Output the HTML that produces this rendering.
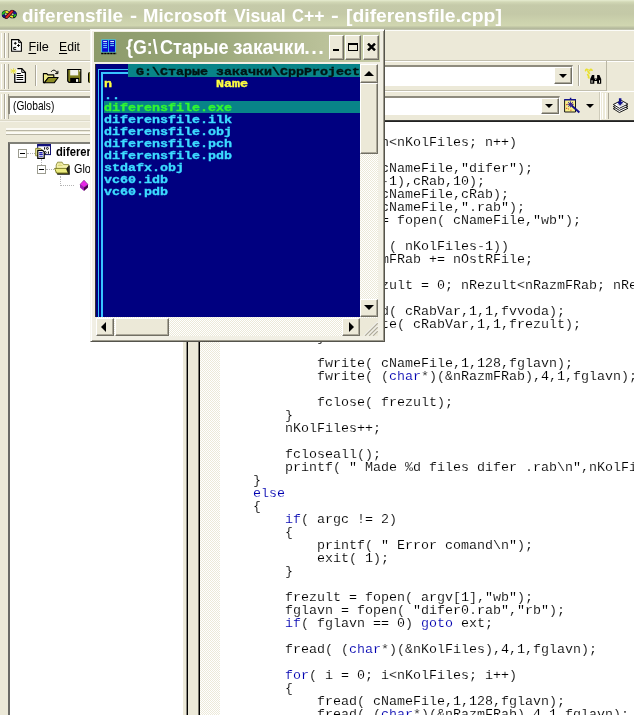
<!DOCTYPE html>
<html lang="ru">
<head>
<meta charset="utf-8">
<title>diferensfile - Microsoft Visual C++ - [diferensfile.cpp]</title>
<style>
html,body{margin:0;padding:0;}
body{width:634px;height:715px;overflow:hidden;position:relative;background:#fff;font-family:"Liberation Sans",sans-serif;}
.a{position:absolute;}
.t{position:absolute;white-space:pre;transform-origin:0 0;line-height:1;}
#title{left:0;top:0;width:634px;height:31px;background:linear-gradient(to bottom,#e6ecd0 0px,#d2d8b6 2px,#c5caa9 5px,#c4c9a7 14px,#ccd2ad 21px,#d0d6b0 25.5px,#bcc1a2 27.5px,#aeb297 29.4px,#f8f8f0 29.8px,#fff 31px);}
#title .t{top:5.7px;color:#fff;font-weight:bold;font-size:19px;}
#bars{left:0;top:31px;width:634px;height:90px;background:#ece9d8;}
.grip{position:absolute;width:2px;border-left:1px solid #fff;border-right:1px solid #aca899;box-sizing:content-box;background:#ece9d8;}
.menu{font-size:12.7px;color:#000;}
.menu u{text-underline-offset:2px;text-decoration-thickness:1px;}
.combo{position:absolute;background:#fff;border:2px solid #8e8b7e;border-right:1px solid #fff;border-bottom:1px solid #fff;box-sizing:border-box;}
.btn{position:absolute;background:#ece9d8;box-sizing:border-box;border:1px solid #fff;border-right-color:#716f64;border-bottom-color:#716f64;box-shadow:inset -1px -1px 0 #aca899;}
.arrow-d{position:absolute;width:0;height:0;border-left:4px solid transparent;border-right:4px solid transparent;border-top:4px solid #000;}
.sepv{position:absolute;width:1px;background:#aca899;border-right:1px solid #fff;}
#ws{left:0;top:121px;width:198px;height:594px;background:#ece9d8;}
#tree{left:8px;top:142px;width:175px;height:573px;background:#fff;border-left:2px solid #6a6a66;border-top:2px solid #808078;box-sizing:border-box;}
.dither{background:repeating-conic-gradient(#fff 0 25%,#ece9d8 0 50%) 0 0/2px 2px;}
#code{left:221px;top:136px;font-family:"Liberation Mono",monospace;font-size:13.33px;line-height:13px;color:#000;white-space:pre;margin:0;-webkit-text-stroke:0.12px #fff;}
#code b{font-weight:normal;color:#0000b0;}
/* popup */
#pop{left:90px;top:29px;width:295px;height:313px;background:#f1efe4;box-sizing:border-box;border:1px solid #f8f7f0;border-right-color:#55544c;border-bottom-color:#55544c;box-shadow:inset 1px 1px 0 #fff, inset -1px -1px 0 #9d9a8c;}
#ptitle{left:3px;top:2px;width:285.5px;height:30px;background:linear-gradient(to right,#8d9b6b 0,#96a476 35%,#b3bb92 70%,#c8cda8 100%);}
#ptitle .t{top:5px;color:#fff;font-weight:bold;font-size:20px;}
#con{left:4px;top:34px;width:265px;height:253px;background:#000080;border-left:1px solid #303030;box-sizing:border-box;overflow:hidden;}
#con>div{margin-top:1px;}
#con>div.row{margin-top:2px;}
.row{position:absolute;left:0;height:12px;font-family:"Liberation Mono",monospace;font-weight:bold;font-size:11px;line-height:12px;white-space:pre;transform-origin:0 0;transform:scaleX(1.212);color:#3cdcff;-webkit-text-stroke:0.35px currentColor;}
.sb{position:absolute;}
.arr{position:absolute;width:0;height:0;}
</style>
</head>
<body>
<div id="root" style="position:absolute;left:0;top:0;width:634px;height:715px;overflow:hidden;will-change:transform">
<!-- main window title bar -->
<div id="title" class="a">
<svg class="a" style="left:1px;top:9.2px;transform:scale(.93,.86);transform-origin:8.2px 5.3px" width="18" height="12" viewBox="0 0 18 12">
<ellipse cx="4.5" cy="5.3" rx="2.9" ry="3.0" fill="none" stroke="#0a0a20" stroke-width="3.4"/>
<ellipse cx="11.9" cy="5.3" rx="2.9" ry="3.0" fill="none" stroke="#0a0a20" stroke-width="3.4"/>
<path d="M1.64 5.82 A2.90 3.00 0 0 1 3.75 2.40" fill="none" stroke="#22c022" stroke-width="2.2"/>
<path d="M4.10 2.33 A2.90 3.00 0 0 1 7.13 4.03" fill="none" stroke="#f0ec20" stroke-width="2.2"/>
<path d="M3.75 8.20 A2.90 3.00 0 0 1 1.64 5.82" fill="none" stroke="#10108c" stroke-width="2.2"/>
<path d="M6.36 7.60 A2.90 3.00 0 0 1 3.75 8.20" fill="none" stroke="#7010a0" stroke-width="2.2"/>
<path d="M9.10 4.52 A2.90 3.00 0 0 1 13.35 2.70" fill="none" stroke="#5010a0" stroke-width="2.2"/>
<path d="M13.35 2.70 A2.90 3.00 0 0 1 14.79 5.04" fill="none" stroke="#1818a0" stroke-width="2.2"/>
<path d="M14.80 5.30 A2.90 3.00 0 0 1 12.89 8.12" fill="none" stroke="#22c022" stroke-width="2.2"/>
<path d="M12.30 8.27 A2.90 3.00 0 0 1 9.39 6.80" fill="none" stroke="#f0ec20" stroke-width="2.2"/>
<path d="M5.2 9 L11.4 1.6" stroke="#30101c" stroke-width="3.6" stroke-linecap="round"/>
<path d="M5.4 8.8 L11.2 1.8" stroke="#e02020" stroke-width="2.2" stroke-linecap="round"/>
</svg>
<span class="t" id="tt" style="left:22.2px;transform:scaleX(0.996)">diferensfile </span><span class="t" style="left:130.4px;transform:scaleX(1.120)">- </span><span class="t" style="left:143.1px;transform:scaleX(0.975)">Microsoft </span><span class="t" style="left:233.6px;transform:scaleX(0.930)">Visual </span><span class="t" style="left:292.1px;transform:scaleX(0.867)">C</span><span class="t" style="left:303.9px;transform:scaleX(0.924)">++ </span><span class="t" style="left:331.1px;transform:scaleX(1.220)">- </span><span class="t" style="left:346.0px;transform:scaleX(1.018)">[diferensfile.cpp]</span>
</div>

<!-- menu + toolbars background -->
<div id="bars" class="a"></div>
<div class="a" style="left:0;top:60px;width:634px;height:1px;background:#c2bfae"></div>
<div class="a" style="left:0;top:61px;width:634px;height:1px;background:#fff"></div>
<div class="a" style="left:0;top:90px;width:607px;height:1px;background:#c2bfae"></div>
<div class="a" style="left:0;top:91px;width:634px;height:1px;background:#fff"></div>
<div class="a" style="left:606px;top:61px;width:1px;height:30px;background:#b9b6a5"></div>


<!-- menu row -->
<div class="grip" style="left:1px;top:33px;height:25px"></div>
<div class="grip" style="left:5px;top:33px;height:25px"></div>
<svg class="a" style="left:10px;top:38px" width="13" height="15" viewBox="0 0 13 15">
<path d="M1.6 1.6 H8.6 L11.4 4.6 V13.3 H1.6 Z" fill="#fff" stroke="#000" stroke-width="1.1"/>
<path d="M8.6 1.6 V4.6 H11.4" fill="none" stroke="#000" stroke-width=".9"/>
<path d="M3.9 5.3 h2.8 M5.3 3.9 v2.8 M7.1 7.5 h2.8 M8.5 6.1 v2.8" stroke="#000" stroke-width="1"/>
<path d="M6.2 9.4 H3.7 V11.4 H6.2" fill="none" stroke="#000" stroke-width="1"/>
</svg>
<span class="t menu" style="left:28.4px;top:41px;transform:scaleX(1.0)"><u>F</u>ile</span>
<span class="t menu" style="left:58.6px;top:41px;transform:scaleX(.96)"><u>E</u>dit</span>

<!-- toolbar 1 -->
<div class="grip" style="left:1px;top:64px;height:25px"></div>
<div class="grip" style="left:5px;top:64px;height:25px"></div>
<svg class="a" style="left:9px;top:67px" width="18" height="17" viewBox="0 0 18 17">
<path d="M5.8 15.3 H16.4 V5.4 L12.8 1.6 H7.6 L5.8 4 Z" fill="#fff"/>
<path d="M5.8 6.6 V15.3 H16.4 V5.4 L12.8 1.6 H8.4" fill="none" stroke="#000" stroke-width="1.3"/>
<path d="M12.8 1.6 V5.4 H16.4" fill="none" stroke="#000" stroke-width="1"/>
<path d="M7.8 6.5 h4 M7.6 8.5 h6.6 M7.6 10.5 h6.6 M7.6 12.5 h6.6" stroke="#000" stroke-width="1.1"/>
<path d="M1.6 2.2 L7.2 5.8 M4.6 1.2 V7 M1.8 5.8 L7.2 2.4 M1.4 4 H7.6" stroke="#e6e048" stroke-width="1"/>
</svg>
<div class="sepv" style="left:35px;top:65px;height:21px"></div>
<svg class="a" style="left:42px;top:68px" width="18" height="16" viewBox="0 0 18 16">
<path d="M1.4 14.6 V5.6 H4.8 L5.8 6.9 H11.8 V9.6 H6.4 L2.6 14.6 Z" fill="#f0ec8c" stroke="#000" stroke-width="1.1" stroke-linejoin="round"/>
<path d="M2.4 14.7 L6.5 9.5 H16.2 L12.3 14.7 Z" fill="#8c8c22" stroke="#000" stroke-width="1.1" stroke-linejoin="round"/>
<path d="M9.2 3.8 C10.4 1.6 13.6 1.4 15.2 5" fill="none" stroke="#000" stroke-width="1"/>
<path d="M13.2 5.6 H15.9 V2.8" fill="none" stroke="#000" stroke-width="1"/>
</svg>
<svg class="a" style="left:66px;top:68px" width="17" height="16" viewBox="0 0 17 16">
<path d="M1.7 1.5 H14.8 V14.3 H3 L1.7 13 Z" fill="#80801e" stroke="#000" stroke-width="1.2"/>
<rect x="4.2" y="2" width="8" height="5.4" fill="#f4f4ec"/>
<rect x="4.2" y="9.9" width="8.9" height="4.5" fill="#000"/>
<rect x="10" y="11.1" width="2.2" height="2.8" fill="#f4f4ec"/>
<rect x="13" y="2.2" width="1.2" height="1.2" fill="#f4f4ec"/>
</svg>
<div class="a" style="left:88px;top:72px;width:3px;height:11px;background:#80801e;border-left:1.2px solid #000;border-radius:2px 0 0 2px"></div>

<div class="combo" style="left:330px;top:65px;width:243px;height:21px"></div>
<div class="btn" style="left:554px;top:67px;width:18px;height:17px"></div>
<div class="arrow-d" style="left:559px;top:74px"></div>
<div class="sepv" style="left:578px;top:65px;height:21px"></div>
<svg class="a" style="left:584px;top:67px" width="19" height="18" viewBox="0 0 19 18">
<path d="M1.6 3.6 q.6 -2.2 2.4 -.6 M5.8 3.6 q.8 -2.4 2.2 -.4 M4 4.6 l1.4 1.8 M3.6 7.6 l1.2 1.6 M4.4 10.2 l.6 .6" fill="none" stroke="#e8e030" stroke-width="1.7" stroke-linecap="round"/>
<path d="M6.2 16.8 V12 L8 8 H10.3 V11.4 H13.1 V8 H15.4 L17.2 12 V16.8 H13.1 V14 H10.3 V16.8 Z" fill="#000"/>
<rect x="7.5" y="13.2" width="1" height="2.6" fill="#f4f2e6"/><rect x="15" y="13.2" width="1" height="2.6" fill="#f4f2e6"/>
<rect x="11.2" y="11.9" width="1" height="1" fill="#f4f2e6"/>
</svg>

<!-- toolbar 2 -->
<div class="grip" style="left:1px;top:94px;height:25px"></div>
<div class="grip" style="left:5px;top:94px;height:25px"></div>
<div class="combo" style="left:8px;top:96px;width:200px;height:19px"></div>
<span class="t" id="glob" style="left:13.3px;top:100.2px;font-size:12.2px;color:#000;transform:scaleX(.835)">(Globals)</span>
<div class="combo" style="left:330px;top:96px;width:230px;height:19px"></div>
<div class="btn" style="left:540.5px;top:98px;width:18.5px;height:15.6px"></div>
<div class="arrow-d" style="left:545px;top:104px"></div>
<svg class="a" style="left:563px;top:97px" width="18" height="17" viewBox="0 0 18 17">
<rect x="1.6" y="2.6" width="10.8" height="12.4" fill="#f8f088"/>
<path d="M1.6 3 V15 H12.5 V3" fill="none" stroke="#181818" stroke-width="1"/>
<path d="M1.1 2.8 H13 M7.6 .8 V2.8" stroke="#14148c" stroke-width="1.5"/>
<path d="M3.2 7.6 h1 M3.2 11.4 h1 M7.4 13.2 h1 M8.6 7.4 h1 M5 12 h.8" stroke="#d83018" stroke-width="1.1"/>
<path d="M7.4 4.4 v6 M4.4 7.3 h6.2 M5.2 5.2 l4.6 4.4 M9.8 5.2 l-4.6 4.4" stroke="#2c1c9c" stroke-width="1"/>
<path d="M8.6 8.6 L16.4 15.4" stroke="#14148c" stroke-width="2"/>
</svg>
<div class="arrow-d" style="left:585.5px;top:104px"></div>
<div class="a" style="left:599px;top:92px;width:1px;height:28px;background:#cfccbb"></div>
<div class="a" style="left:600px;top:92px;width:1px;height:28px;background:#fff"></div>
<div class="grip" style="left:601.5px;top:93px;height:26px"></div>
<div class="grip" style="left:605px;top:93px;height:26px"></div>
<svg class="a" style="left:612px;top:96px" width="18" height="18" viewBox="0 0 18 18">
<path d="M1.3 12.7 L9.3 8.6 L15.9 12.3 L7.4 16.5 Z" fill="#fff" stroke="#000" stroke-width=".9" stroke-linejoin="round"/>
<path d="M1.3 10.6 L9.3 6.5 L15.9 10.2 L7.4 14.4 Z" fill="#fff" stroke="#000" stroke-width=".9" stroke-linejoin="round"/>
<path d="M1.3 8.5 L9.3 4.4 L15.9 8.1 L7.4 12.3 Z" fill="#fff" stroke="#000" stroke-width=".9" stroke-linejoin="round"/>
<path d="M4.6 8.4 L9 6.2 L12.6 8.2 L8 10.6 Z" fill="#c8c8c8"/>
<path d="M6.9 2.2 h2.5 v3.8 h1.9 l-3.2 3.4 l-3.1 -3.4 h1.9 z" fill="#10108c"/>
</svg>

<!-- workspace pane -->
<div id="ws" class="a"></div>
<div class="a" style="left:0;top:120px;width:187px;height:1px;background:#dcd9c8"></div>
<div class="a" style="left:0;top:121px;width:187px;height:1px;background:#f6f4ea"></div>
<div class="a" style="left:6px;top:128px;width:180px;height:2px;background:#fbfaf4;border-bottom:1px solid #b8b5a4"></div>
<div class="a" style="left:6px;top:131.8px;width:180px;height:2px;background:#fbfaf4;border-bottom:1px solid #b8b5a4"></div>
<div id="tree" class="a"></div>
<div class="a" style="left:186px;top:121px;width:2px;height:594px;background:linear-gradient(to right,#8a8880 0,#8a8880 50%,#000 50%)"></div>
<div class="a" style="left:198px;top:121px;width:2px;height:594px;background:linear-gradient(to right,#77756c 0,#77756c 50%,#000 50%)"></div>

<!-- tree content -->
<div class="a" style="left:18px;top:149px;width:9px;height:9px;box-sizing:border-box;border:1px solid #9c9c90;background:#fff"></div>
<div class="a" style="left:20px;top:153px;width:5px;height:1px;background:#000"></div>
<div class="a" style="left:27px;top:153px;width:8px;height:0;border-top:1px dotted #b4b4b4"></div>
<svg class="a" style="left:35px;top:143px" width="17" height="17" viewBox="0 0 17 17">
<rect x="2.7" y="1.6" width="12.8" height="10" fill="#fff" stroke="#10106c" stroke-width="1"/>
<rect x="2.2" y="1.1" width="13.8" height="2.2" fill="#10107c"/>
<path d="M9.6 4.2 v2.4 M13.4 8.4 v2.4" stroke="#000" stroke-width="1"/>
<ellipse cx="12.4" cy="5.4" rx=".9" ry="1.1" fill="none" stroke="#000" stroke-width=".9"/>
<ellipse cx="10.3" cy="9.6" rx=".9" ry="1.1" fill="none" stroke="#000" stroke-width=".9"/>
<path d="M.7 12.8 V5.4 H5.6 L6.6 6.6 V12.8 Z" fill="#f0eca8" stroke="#8c8c30" stroke-width="1"/>
<path d="M2.8 7.3 H7.6 L9.2 8.9 V15.3 H2.8 Z" fill="#fff" stroke="#000" stroke-width="1.2"/>
<path d="M4.2 9.6 h3.4 M4.2 11.4 h3.6 M4.2 13.3 h3.6" stroke="#1c1cb0" stroke-width="1.1"/>
</svg>
<span class="t" id="tr1" style="left:55.5px;top:146.3px;font-size:12.3px;font-weight:bold;color:#000;transform:scaleX(.91)">diferensfile classes</span>
<div class="a" style="left:41px;top:159px;width:0;height:6px;border-left:1px dotted #b4b4b4"></div>
<div class="a" style="left:37px;top:165px;width:9px;height:9px;box-sizing:border-box;border:1px solid #9c9c90;background:#fff"></div>
<div class="a" style="left:39px;top:169px;width:5px;height:1px;background:#000"></div>
<div class="a" style="left:46px;top:169px;width:8px;height:0;border-top:1px dotted #b4b4b4"></div>
<svg class="a" style="left:54px;top:161px" width="18" height="15" viewBox="0 0 18 15">
<path d="M12.6 4.6 H15.8 V13.7 H3.3 L2.9 12 H14 Z" fill="#141410"/>
<path d="M2.2 11.9 V4 L3.6 1.2 H8.1 L9.5 3.6 H14.7 V11.9 Z" fill="#f6f2b0" stroke="#8c8c38" stroke-width=".9" stroke-linejoin="round"/>
<path d="M4.4 3 h3 M3.8 4.6 h4.8" stroke="#d8d478" stroke-width="1"/>
<path d="M.6 7.4 H12.3 L14.1 12 H2.6 Z" fill="#ecec80" stroke="#74741c" stroke-width=".9" stroke-linejoin="round"/>
<path d="M12.3 7.4 L14.1 12 L14.8 12 V4.6 Z" fill="#141410"/>
</svg>
<span class="t" id="tr2" style="left:74.3px;top:162.6px;font-size:12.3px;color:#000;transform:scaleX(.88)">Globals</span>
<div class="a" style="left:60px;top:176px;width:0;height:10px;border-left:1px dotted #b4b4b4"></div>
<div class="a" style="left:60px;top:185px;width:14px;height:0;border-top:1px dotted #b4b4b4"></div>
<svg class="a" style="left:79px;top:179px" width="10" height="13" viewBox="0 0 10 13">
<path d="M1 5.5 L5 8.3 V12 L1 8.5 Z" fill="#a018b8"/>
<path d="M9 5.5 L5 8.3 V12 L9 8.5 Z" fill="#48004c"/>
<path d="M5 1.2 L9 5.5 L5 8.3 L1 5.5 Z" fill="#e828e8" stroke="#701078" stroke-width=".6"/>
</svg>

<!-- editor -->
<div class="a" style="left:198px;top:120px;width:436px;height:2px;background:linear-gradient(#4a4a46,#141414)"></div>
<div class="a dither" style="left:200px;top:122px;width:20px;height:593px"></div>
<pre id="code" class="a">        <b>for</b>( n = 0; n&lt;nKolFiles; n++)
        {
            strcpy( cNameFile,"difer");
            itoa( (n-1),cRab,10);
            strcat( cNameFile,cRab);
            strcat( cNameFile,".rab");
            frezult = fopen( cNameFile,"wb");

            <b>if</b>( n == ( nKolFiles-1))
                nRazmFRab += nOstRFile;

            <b>for</b>( nRezult = 0; nRezult&lt;nRazmFRab; nRezult++)
            {
                fread( cRabVar,1,1,fvvoda);
                fwrite( cRabVar,1,1,frezult);
            }

            fwrite( cNameFile,1,128,fglavn);
            fwrite( (<b>char</b>*)(&amp;nRazmFRab),4,1,fglavn);

            fclose( frezult);
        }
        nKolFiles++;

        fcloseall();
        printf( " Made %d files difer .rab\n",nKolFiles);
    }
    <b>else</b>
    {
        <b>if</b>( argc != 2)
        {
            printf( " Error comand\n");
            exit( 1);
        }

        frezult = fopen( argv[1],"wb");
        fglavn = fopen( "difer0.rab","rb");
        <b>if</b>( fglavn == 0) <b>goto</b> ext;

        fread( (<b>char</b>*)(&amp;nKolFiles),4,1,fglavn);

        <b>for</b>( i = 0; i&lt;nKolFiles; i++)
        {
            fread( cNameFile,1,128,fglavn);
            fread( (<b>char</b>*)(&amp;nRazmFRab),4,1,fglavn);</pre>

<!-- popup: Far manager window -->
<div id="pop" class="a">
<div id="ptitle" class="a">
<svg class="a" style="left:5px;top:7px" width="19" height="16" viewBox="0 0 19 16">
<rect x="2.2" y=".4" width="14.6" height="13" fill="#38c8f0"/>
<rect x="3.1" y="1.2" width="6" height="11.6" fill="#0808d0"/>
<rect x="10" y="1.2" width="6" height="11.6" fill="#0808c0"/>
<path d="M4.2 2.6 h3.8 M11.2 2.6 h3.8" stroke="#f0f8ff" stroke-width="1"/>
<path d="M4.2 4.6 h3.8 M4.2 6.6 h3.8 M4.2 8.6 h3.8 M11.2 4.6 h3.8 M11.2 6.6 h3.8" stroke="#70d0ff" stroke-width="1"/>
<path d="M2.2 14.4 h15.2" stroke="#000" stroke-width="1.5" stroke-dasharray="2.4 .6"/>
</svg>
<span class="t" id="pt" style="left:31.7px;transform:scaleX(.89)">{G:\</span><span class="t" id="pt1" style="left:65.6px;transform:scaleX(.905)">Старые</span><span class="t" id="pt2" style="left:138.6px;transform:scaleX(.958)">закачки</span><span class="t" id="pt3" style="left:210.2px;letter-spacing:1.5px">...</span>
<div class="btn" style="left:235px;top:3px;width:15px;height:24.6px"></div>
<div class="a" style="left:239px;top:17px;width:6px;height:2.4px;background:#000"></div>
<div class="btn" style="left:251px;top:3px;width:16px;height:24.6px"></div>
<div class="a" style="left:253.5px;top:10.5px;width:10px;height:8px;box-sizing:border-box;border:1px solid #000;border-top-width:2px"></div>
<div class="btn" style="left:268.5px;top:3px;width:16px;height:24.6px"></div>
<svg class="a" style="left:272.5px;top:11px" width="9" height="8" viewBox="0 0 9 8"><path d="M1 .6 L8 7.4 M8 .6 L1 7.4" stroke="#000" stroke-width="2.4"/></svg>
</div>
<div id="con" class="a">
<div class="a" style="left:32px;top:-1px;width:232px;height:13px;background:#088488"></div>
<div class="a" style="left:8px;top:36px;width:256px;height:12px;background:#088488"></div>
<div class="a" style="left:1.6px;top:4px;width:1.6px;height:250px;background:#38c4ff"></div>
<div class="a" style="left:5.4px;top:8px;width:1.8px;height:250px;background:#38c4ff"></div>
<div class="a" style="left:1.6px;top:3.6px;width:30.4px;height:1.4px;background:#38c4ff"></div>
<div class="a" style="left:5.4px;top:7.4px;width:26.6px;height:1.4px;background:#38c4ff"></div>
<div class="row" style="left:32px;top:0;color:#001414"> G:\Старые закачки\CppProject</div>
<div class="row" style="left:8px;top:12px;color:#ffff40">n</div>
<div class="row" style="left:120px;top:12px;color:#ffff40">Name</div>
<div class="row" style="left:8px;top:24px">..</div>
<div class="row" style="left:8px;top:36px;color:#30f830">diferensfile.exe</div>
<div class="row" style="left:8px;top:48px">diferensfile.ilk</div>
<div class="row" style="left:8px;top:60px">diferensfile.obj</div>
<div class="row" style="left:8px;top:72px">diferensfile.pch</div>
<div class="row" style="left:8px;top:84px">diferensfile.pdb</div>
<div class="row" style="left:8px;top:96px">stdafx.obj</div>
<div class="row" style="left:8px;top:108px">vc60.idb</div>
<div class="row" style="left:8px;top:120px">vc60.pdb</div>
</div>
<!-- vertical scrollbar -->
<div class="a dither" style="left:269px;top:34px;width:18px;height:254px"></div>
<div class="btn" style="left:269px;top:34px;width:18px;height:19px"></div>
<div class="btn" style="left:269px;top:53px;width:18px;height:71px"></div>
<div class="arr" style="left:273px;top:41px;border-left:5px solid transparent;border-right:5px solid transparent;border-bottom:5px solid #000"></div>
<div class="btn" style="left:269px;top:269px;width:18px;height:18px"></div>
<div class="arr" style="left:273px;top:275px;border-left:5px solid transparent;border-right:5px solid transparent;border-top:5px solid #000"></div>
<!-- horizontal scrollbar -->
<div class="a dither" style="left:5px;top:287px;width:264px;height:19px"></div>
<div class="btn" style="left:5px;top:288px;width:18px;height:18px"></div>
<div class="arr" style="left:10px;top:292px;border-top:5px solid transparent;border-bottom:5px solid transparent;border-right:5px solid #000"></div>
<div class="btn" style="left:24px;top:288px;width:54px;height:18px"></div>
<div class="btn" style="left:251px;top:288px;width:18px;height:18px"></div>
<div class="arr" style="left:258px;top:292px;border-top:5px solid transparent;border-bottom:5px solid transparent;border-left:5px solid #000"></div>
<svg class="a" style="left:269px;top:288px" width="18" height="18" viewBox="0 0 18 18">
<rect width="18" height="18" fill="#ece9d8"/>
<path d="M5 17.5 L17.5 5 M9 17.5 L17.5 9 M13 17.5 L17.5 13" stroke="#aca899" stroke-width="1.6"/>
<path d="M4 17.5 L17.5 4 M8 17.5 L17.5 8 M12 17.5 L17.5 12" stroke="#fff" stroke-width="1"/>
</svg>
</div>
</div>
</body>
</html>
